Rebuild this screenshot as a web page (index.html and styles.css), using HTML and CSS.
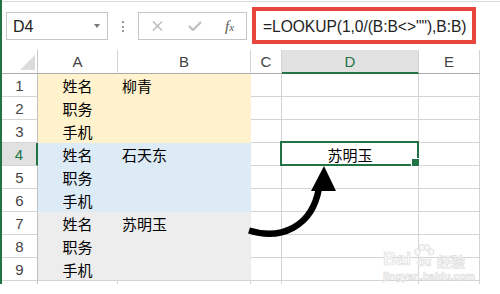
FILE: index.html
```html
<!DOCTYPE html>
<html lang="zh-CN">
<head>
<meta charset="utf-8">
<title>LOOKUP</title>
<link rel="stylesheet" href="styles.css">
</head>
<body>
<div class="window">
  <div class="toolbar">
    <div class="namebox"><span class="ref">D4</span><span class="caret"></span></div>
    <div class="dots"><i></i><i></i><i></i></div>
    <div class="fxbox">
      <svg class="ic" width="11" height="10" viewBox="0 0 11 10"><path d="M1 0.5 L10 9.5 M10 0.5 L1 9.5" stroke="#b9b9b9" stroke-width="1.4" fill="none"/></svg>
      <svg class="ic" width="14" height="10" viewBox="0 0 14 10"><path d="M1 5 L5 9 L13 1" stroke="#c2c2c2" stroke-width="2.4" fill="none"/></svg>
      <span class="fx">f<span class="fxx">x</span></span>
    </div>
    <div class="formula">=LOOKUP(1,0/(B:B&lt;&gt;""),B:B)</div>
  </div>

  <div class="sheet">
    <div class="c corner"><svg width="15" height="15" viewBox="0 0 15 15"><polygon points="15,0 15,15 0,15" fill="#dcdcdc"/></svg></div>
    <div class="c ch">A</div>
    <div class="c ch">B</div>
    <div class="c ch">C</div>
    <div class="c ch hl">D</div>
    <div class="c ch">E</div>

    <div class="c rh">1</div>
    <div class="c ca y">姓名</div>
    <div class="c cb y">柳青</div>
    <div class="c"></div><div class="c"></div><div class="c"></div>

    <div class="c rh">2</div>
    <div class="c ca y">职务</div>
    <div class="c cb y"></div>
    <div class="c"></div><div class="c"></div><div class="c"></div>

    <div class="c rh">3</div>
    <div class="c ca y">手机</div>
    <div class="c cb y"></div>
    <div class="c"></div><div class="c"></div><div class="c"></div>

    <div class="c rh hl">4</div>
    <div class="c ca b">姓名</div>
    <div class="c cb b">石天东</div>
    <div class="c"></div>
    <div class="c sel">苏明玉</div>
    <div class="c"></div>

    <div class="c rh">5</div>
    <div class="c ca b">职务</div>
    <div class="c cb b"></div>
    <div class="c"></div><div class="c"></div><div class="c"></div>

    <div class="c rh">6</div>
    <div class="c ca b">手机</div>
    <div class="c cb b"></div>
    <div class="c"></div><div class="c"></div><div class="c"></div>

    <div class="c rh">7</div>
    <div class="c ca g">姓名</div>
    <div class="c cb g">苏明玉</div>
    <div class="c"></div><div class="c"></div><div class="c"></div>

    <div class="c rh">8</div>
    <div class="c ca g">职务</div>
    <div class="c cb g"></div>
    <div class="c"></div><div class="c"></div><div class="c"></div>

    <div class="c rh">9</div>
    <div class="c ca g last">手机</div>
    <div class="c cb g last"></div>
    <div class="c"></div><div class="c"></div><div class="c"></div>

    <div class="c rh"></div>
    <div class="c"></div><div class="c"></div><div class="c"></div><div class="c"></div><div class="c"></div>
  </div>

  <svg class="arrow" width="500" height="294" viewBox="0 0 500 294">
    <path d="M249 230.5 C280 240, 312 228, 319 188" stroke="#000" stroke-width="6.5" fill="none"/>
    <polygon points="324,166 311,191 336,191" fill="#000"/>
  </svg>

  <div class="wm">
    <div class="wm1">
      <span class="bai">Bai</span>
      <span class="paw">
        <svg width="22" height="14" viewBox="0 0 22 14"><g fill="#f8f8f8" stroke="#e0e0e0" stroke-width="1"><ellipse cx="4.5" cy="8" rx="2.8" ry="3.2"/><ellipse cx="9" cy="3.5" rx="2.8" ry="3"/><ellipse cx="14" cy="3.5" rx="2.8" ry="3"/><ellipse cx="18" cy="8" rx="2.8" ry="3.2"/></g></svg>
        <span class="du">du</span>
      </span>
      <span class="jy">经验</span>
    </div>
    <div class="wm2">jingyan.baidu.com</div>
  </div>
</div>
</body>
</html>
```

FILE: styles.css
```css
* { box-sizing: border-box; }

body {
  margin: 0;
  background: #fff;
  font-family: "Liberation Sans", Arial, sans-serif;
}

.window {
  position: relative;
  width: 500px;
  height: 284px;
  border-left: 2px solid #217346;
  overflow: hidden;
}

/* toolbar */
.toolbar {
  display: flex;
  align-items: flex-start;
  height: 49px;
  margin-top: 1px;
  border-top: 1px solid #dadada;
  padding-top: 10px;
}

.namebox {
  margin-left: 4px;
  width: 102px;
  height: 28px;
  border: 1px solid #c6c6c6;
  display: flex;
  align-items: center;
  justify-content: space-between;
  padding: 0 7px 0 6px;
  font-size: 16px;
  color: #222;
}
.namebox .ref { line-height: 1; padding-top: 2px; }
.caret {
  width: 0;
  height: 0;
  border-left: 3.5px solid transparent;
  border-right: 3.5px solid transparent;
  border-top: 4px solid #777;
}

.dots {
  margin-left: 14px;
  margin-top: 9px;
  width: 2px;
  display: flex;
  flex-direction: column;
  gap: 2.5px;
}
.dots i {
  display: block;
  width: 2px;
  height: 2px;
  background: #9a9a9a;
}

.fxbox {
  margin-left: 14px;
  width: 109px;
  height: 28px;
  border: 1px solid #c6c6c6;
  display: grid;
  grid-template-columns: 37px 37px 33px;
  align-items: center;
  justify-items: center;
}
.fx {
  font-family: "Liberation Serif", "Times New Roman", serif;
  font-style: italic;
  font-size: 15px;
  color: #555;
  line-height: 1;
}
.fxx { font-size: 11px; }

.formula {
  margin-left: 5px;
  margin-top: -5px;
  width: 224px;
  height: 37px;
  border: 4px solid #e8453c;
  padding: 3px 0 0 7px;
  font-size: 15.6px;
  letter-spacing: -0.05px;
  line-height: 26px;
  color: #222;
  white-space: nowrap;
  overflow: hidden;
}

/* sheet grid */
.sheet {
  display: grid;
  grid-template-columns: 36px 80px 133px 31px 137px 61px;
  grid-template-rows: 24px repeat(10, 23px);
}

.c {
  border-right: 1px solid #d4d4d4;
  border-bottom: 1px solid #d4d4d4;
  display: flex;
  align-items: center;
  font-family: "Noto Sans CJK SC", sans-serif;
  font-size: 15px;
  line-height: 1;
  color: #000;
}

.corner {
  justify-content: flex-end;
  align-items: flex-end;
  padding: 0 2px 3px 0;
  border-right-color: #c8c8c8;
  border-bottom-color: #ababab;
}

.ch {
  justify-content: center;
  font-family: "Liberation Sans", Arial, sans-serif;
  font-size: 15px;
  color: #444;
  border-bottom-color: #ababab;
}
.ch.hl {
  background: #e1e1e1;
  color: #217346;
  border-bottom: 2px solid #217346;
}

.rh {
  justify-content: center;
  font-family: "Liberation Sans", Arial, sans-serif;
  font-size: 15px;
  color: #444;
  border-right-color: #c0c0c0;
}
.rh.hl {
  background: #e1e1e1;
  color: #217346;
  border-right: 2px solid #217346;
}

.ca { justify-content: center; }
.cb { padding-left: 4px; }

.y { background: #fff2cc; border-color: #fff2cc; }
.b { background: #ddebf7; border-color: #ddebf7; }
.g { background: #ededed; border-color: #ededed; }
.g.last { border-bottom-color: #d4d4d4; }

.sel {
  position: relative;
  justify-content: center;
}
.sel::after {
  content: "";
  position: absolute;
  left: -2px;
  top: -2px;
  right: -1px;
  bottom: -1px;
  border: 2px solid #217346;
}
.sel::before {
  content: "";
  position: absolute;
  right: -2px;
  bottom: -2px;
  width: 7px;
  height: 7px;
  background: #217346;
  border: 1px solid #fff;
  z-index: 1;
}

/* overlays */
.arrow {
  position: absolute;
  left: -2px;
  top: 0;
  pointer-events: none;
}

.wm {
  position: absolute;
  left: 381px;
  top: 239px;
  color: #f8f8f8;
  -webkit-text-stroke: 0.6px #dddddd;
  font-family: "Liberation Sans", Arial, sans-serif;
}
.wm1 {
  display: flex;
  align-items: flex-end;
  height: 29px;
}
.bai {
  font-size: 18px;
  font-weight: bold;
  line-height: 1;
}
.paw {
  display: flex;
  flex-direction: column;
  align-items: center;
  margin-left: 2px;
}
.du {
  font-size: 12px;
  font-weight: bold;
  line-height: 1;
  margin-top: -2px;
}
.jy {
  font-family: "Noto Sans CJK SC", sans-serif;
  font-size: 14px;
  font-weight: bold;
  line-height: 1;
  margin-left: 2px;
}
.wm2 {
  margin-top: 3px;
  font-size: 10.5px;
  line-height: 1;
  font-weight: bold;
}
```
